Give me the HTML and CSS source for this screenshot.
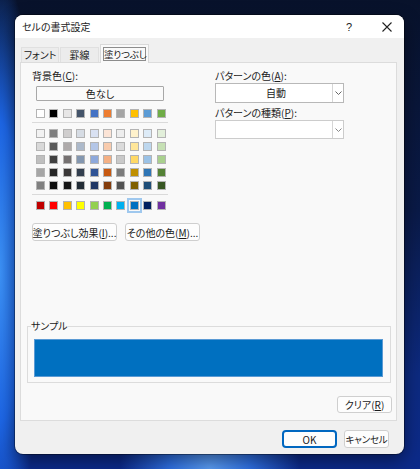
FILE: index.html
```html
<!DOCTYPE html>
<html lang="ja">
<head>
    <meta charset="UTF-8">
    <title>セルの書式設定</title>
    <link rel="stylesheet" href="styles.css">
</head>
<body>
    <div class="dialog">
        <div class="titlebar">
            <span class="title">セルの書式設定</span>
            <span class="help">?</span>
            <span class="close">
                <svg width="10" height="10" viewBox="0 0 10 10"><path d="M0.5 0.5L9.5 9.5M9.5 0.5L0.5 9.5" stroke="#222" stroke-width="1.1" fill="none"/></svg>
            </span>
        </div>

        <div class="dialog-body">
            <div class="tabs">
                <div class="tab">フォント</div>
                <div class="tab">罫線</div>
                <div class="tab active"><span class="focus">塗りつぶし</span></div>
            </div>

            <div class="panel">
                <div class="top">
                    <div class="fill-col">
                        <div class="label">背景色(<u>C</u>):</div>
                        <button class="btn btn-none">色なし</button>

                        <div class="swatches">
                            <span class="sw" style="background:#ffffff"></span>
                            <span class="sw" style="background:#000000"></span>
                            <span class="sw" style="background:#e7e6e6"></span>
                            <span class="sw" style="background:#44546a"></span>
                            <span class="sw" style="background:#4472c4"></span>
                            <span class="sw" style="background:#ed7d31"></span>
                            <span class="sw" style="background:#a5a5a5"></span>
                            <span class="sw" style="background:#ffc000"></span>
                            <span class="sw" style="background:#5b9bd5"></span>
                            <span class="sw" style="background:#70ad47"></span>
                        </div>
                        <div class="sep"></div>

                        <div class="swatches">
                            <span class="sw" style="background:#f2f2f2"></span>
                            <span class="sw" style="background:#7f7f7f"></span>
                            <span class="sw" style="background:#d0cece"></span>
                            <span class="sw" style="background:#d6dce4"></span>
                            <span class="sw" style="background:#d9e1f2"></span>
                            <span class="sw" style="background:#fce4d6"></span>
                            <span class="sw" style="background:#ededed"></span>
                            <span class="sw" style="background:#fff2cc"></span>
                            <span class="sw" style="background:#ddebf7"></span>
                            <span class="sw" style="background:#e2efda"></span>

                            <span class="sw" style="background:#d9d9d9"></span>
                            <span class="sw" style="background:#595959"></span>
                            <span class="sw" style="background:#aeaaaa"></span>
                            <span class="sw" style="background:#acb9ca"></span>
                            <span class="sw" style="background:#b4c6e7"></span>
                            <span class="sw" style="background:#f8cbad"></span>
                            <span class="sw" style="background:#dbdbdb"></span>
                            <span class="sw" style="background:#ffe699"></span>
                            <span class="sw" style="background:#bdd7ee"></span>
                            <span class="sw" style="background:#c6e0b4"></span>

                            <span class="sw" style="background:#bfbfbf"></span>
                            <span class="sw" style="background:#404040"></span>
                            <span class="sw" style="background:#757171"></span>
                            <span class="sw" style="background:#8497b0"></span>
                            <span class="sw" style="background:#8ea9db"></span>
                            <span class="sw" style="background:#f4b084"></span>
                            <span class="sw" style="background:#c9c9c9"></span>
                            <span class="sw" style="background:#ffd966"></span>
                            <span class="sw" style="background:#9bc2e6"></span>
                            <span class="sw" style="background:#a9d08e"></span>

                            <span class="sw" style="background:#a6a6a6"></span>
                            <span class="sw" style="background:#262626"></span>
                            <span class="sw" style="background:#3a3838"></span>
                            <span class="sw" style="background:#333f4f"></span>
                            <span class="sw" style="background:#305496"></span>
                            <span class="sw" style="background:#c65911"></span>
                            <span class="sw" style="background:#7b7b7b"></span>
                            <span class="sw" style="background:#bf8f00"></span>
                            <span class="sw" style="background:#2f75b5"></span>
                            <span class="sw" style="background:#548235"></span>

                            <span class="sw" style="background:#808080"></span>
                            <span class="sw" style="background:#0d0d0d"></span>
                            <span class="sw" style="background:#161616"></span>
                            <span class="sw" style="background:#222b35"></span>
                            <span class="sw" style="background:#203764"></span>
                            <span class="sw" style="background:#833c0c"></span>
                            <span class="sw" style="background:#525252"></span>
                            <span class="sw" style="background:#806000"></span>
                            <span class="sw" style="background:#1f4e78"></span>
                            <span class="sw" style="background:#375623"></span>
                        </div>
                        <div class="sep"></div>

                        <div class="swatches">
                            <span class="sw" style="background:#c00000"></span>
                            <span class="sw" style="background:#ff0000"></span>
                            <span class="sw" style="background:#ffc000"></span>
                            <span class="sw" style="background:#ffff00"></span>
                            <span class="sw" style="background:#92d050"></span>
                            <span class="sw" style="background:#00b050"></span>
                            <span class="sw" style="background:#00b0f0"></span>
                            <span class="sw selected" style="background:#0070c0"></span>
                            <span class="sw" style="background:#002060"></span>
                            <span class="sw" style="background:#7030a0"></span>
                        </div>

                        <div class="actions">
                            <button class="btn btn-effect">塗りつぶし効果(<u>I</u>)...</button>
                            <button class="btn btn-more">その他の色(<u>M</u>)...</button>
                        </div>
                    </div>

                    <div class="pattern-col">
                        <div class="label">パターンの色(<u>A</u>):</div>
                        <div class="combo">
                            <span class="combo-value">自動</span>
                            <span class="combo-arrow">
                                <svg width="7" height="4" viewBox="0 0 7 4"><path d="M0.5 0.5L3.5 3.5L6.5 0.5" stroke="#666" fill="none"/></svg>
                            </span>
                        </div>
                        <div class="label label-2">パターンの種類(<u>P</u>):</div>
                        <div class="combo combo-disabled">
                            <span class="combo-value"></span>
                            <span class="combo-arrow">
                                <svg width="7" height="4" viewBox="0 0 7 4"><path d="M0.5 0.5L3.5 3.5L6.5 0.5" stroke="#888" fill="none"/></svg>
                            </span>
                        </div>
                    </div>
                </div>

                <div class="sample">
                    <span class="sample-label">サンプル</span>
                    <div class="sample-fill"></div>
                </div>

                <div class="clear-row">
                    <button class="btn btn-clear">クリア(<u>R</u>)</button>
                </div>
            </div>

            <div class="footer">
                <button class="btn btn-ok">OK</button>
                <button class="btn btn-cancel">キャンセル</button>
            </div>
        </div>
    </div>
</body>
</html>
```

FILE: styles.css
```css
* {
    box-sizing: border-box;
    margin: 0;
    padding: 0;
}

body {
    width: 420px;
    height: 469px;
    overflow: hidden;
    padding: 15px 16px 15px 15px;
    font-family: "Noto Sans CJK JP", "Noto Sans", sans-serif;
    font-size: 10px;
    font-feature-settings: "palt";
    white-space: nowrap;
    color: #1a1a1a;
    background:
        radial-gradient(ellipse 90px 110px at 50% 100%, #5a9cf2 0%, #2e6ee0 45%, rgba(20, 60, 180, 0) 100%),
        radial-gradient(ellipse 40px 300px at 0% 58%, #3d92f7 0%, #1d66e6 50%, rgba(20, 80, 210, 0) 100%),
        linear-gradient(180deg, #08122b 0%, #0a1a48 45%, #0d2a80 80%, #0c2a8a 100%);
}

u {
    text-decoration: underline;
    text-underline-offset: 1px;
}

.dialog {
    width: 389px;
    height: 439px;
    background: #f0f0f0;
    border-radius: 8px;
    overflow: hidden;
    box-shadow: 0 0 0 1px rgba(0, 0, 0, 0.35), 0 6px 18px rgba(0, 0, 0, 0.45);
    display: flex;
    flex-direction: column;
}

.titlebar {
    height: 23px;
    background: #ffffff;
    display: flex;
    align-items: center;
    padding: 0 12px 0 7px;
    flex-shrink: 0;
}

.title {
    flex: 1;
    font-size: 10px;
    color: #222;
}

.help {
    font-family: "Liberation Sans", sans-serif;
    font-size: 11px;
    color: #222;
    margin-right: 30px;
}

.close {
    display: flex;
    align-items: center;
}

.dialog-body {
    flex: 1;
    display: flex;
    flex-direction: column;
    padding: 6px 7px 0 5px;
}

/* tabs */
.tabs {
    display: flex;
    align-items: flex-end;
    height: 18px;
    padding-left: 1px;
    position: relative;
    z-index: 1;
}

.tab {
    height: 15px;
    line-height: 14px;
    text-align: center;
    background: #ececec;
    border: 1px solid #e0e0e0;
    border-bottom: none;
    color: #222;
}

.tab:nth-child(1) { width: 38px; }
.tab:nth-child(2) { width: 39px; margin-left: 1px; }

.tab.active {
    width: 49px;
    height: 19px;
    margin-left: 1px;
    margin-bottom: -1px;
    background: #f9f9f9;
    border-color: #d9d9d9;
    padding: 2px 2px 0;
}

.focus {
    display: block;
    height: 14px;
    line-height: 12px;
    border: 1px solid #8c8c8c;
    font-size: 9.5px;
    letter-spacing: -0.2px;
    text-align: center;
}

/* panel */
.panel {
    height: 359px;
    background: #f9f9f9;
    border: 1px solid #dcdcdc;
    padding: 6px 5px 7px 11px;
    display: flex;
    flex-direction: column;
}

.top {
    display: flex;
    gap: 43px;
}

.fill-col {
    width: 140px;
    flex-shrink: 0;
}

.label {
    height: 13px;
    line-height: 13px;
    color: #222;
}

.btn {
    font-family: inherit;
    font-size: 10px;
    font-feature-settings: "palt";
    white-space: nowrap;
    color: #1a1a1a;
    background: #fdfdfd;
    border: 1px solid #cfcfcf;
    border-radius: 3px;
    display: flex;
    align-items: center;
    justify-content: center;
    padding: 0;
    flex-shrink: 0;
}

.btn-none {
    width: 128px;
    height: 15px;
    margin: 4px 0 0 4px;
    border-color: #a8a8a8;
    border-radius: 1px;
    background: #fafafa;
}

.swatches {
    display: grid;
    grid-template-columns: repeat(10, 9px);
    column-gap: 4.4px;
    row-gap: 4px;
    margin: 8px 0 0 4px;
}

.sep + .swatches {
    margin-top: 6px;
}

.sw {
    width: 9px;
    height: 9px;
    border: 1px solid #b4b4b4;
}

.sw.selected {
    outline: 2px solid #9fc8ee;
    outline-offset: 1px;
}

.sep {
    width: 136px;
    height: 1px;
    background: #dadada;
    margin-top: 4px;
}

.actions {
    display: flex;
    gap: 8px;
    margin-top: 13px;
}

.actions .btn {
    height: 18px;
}

.btn-effect { width: 85px; }
.btn-more { width: 75px; }

/* pattern */
.pattern-col {
    width: 129px;
    flex-shrink: 0;
}

.combo {
    height: 20px;
    margin-top: 1px;
    background: #ffffff;
    border: 1px solid #b8b8b8;
    display: flex;
}

.combo-value {
    flex: 1;
    text-align: center;
    line-height: 18px;
    padding-left: 4px;
}

.combo-arrow {
    width: 11px;
    border-left: 1px solid #d6d6d6;
    display: flex;
    align-items: center;
    justify-content: center;
}

.label-2 {
    margin-top: 3px;
}

.combo-disabled {
    height: 19px;
    border-color: #cccccc;
}

/* sample */
.sample {
    margin: auto 0 0 -5px;
    height: 57px;
    border: 1px solid #dcdcdc;
    padding: 12px 7px 5px 6px;
    position: relative;
}

.sample-label {
    position: absolute;
    top: -8px;
    left: 3px;
    line-height: 13px;
    background: #f9f9f9;
    color: #222;
}

.sample-fill {
    height: 100%;
    background: #0070c0;
    border: 1px solid #5a9ad4;
}

.clear-row {
    display: flex;
    justify-content: flex-end;
    margin: 13px -1px 0 0;
}

.btn-clear {
    width: 55px;
    height: 17px;
}

/* footer */
.footer {
    display: flex;
    justify-content: flex-end;
    gap: 7px;
    padding: 9px 8px 0 0;
}

.footer .btn {
    height: 18px;
}

.btn-ok {
    width: 55px;
    border: 2px solid #0067c0;
    border-radius: 4px;
}

.btn-cancel {
    width: 45px;
    font-size: 9.5px;
    letter-spacing: -0.2px;
}
```
